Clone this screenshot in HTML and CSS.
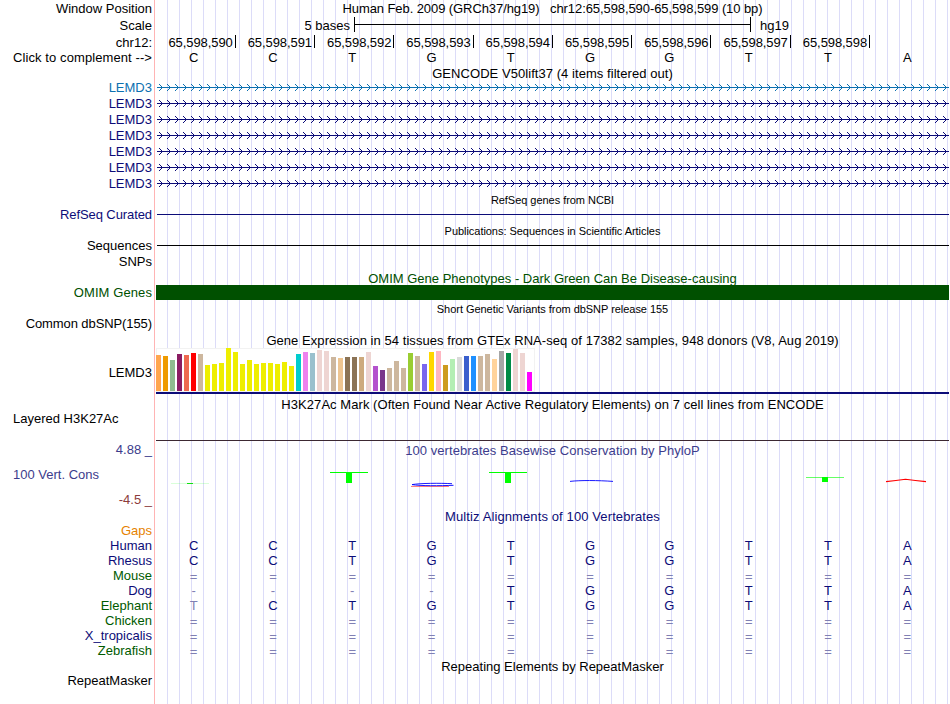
FILE: index.html
```html
<!DOCTYPE html>
<html lang="en">
<head>
<meta charset="utf-8">
<title>Human chr12:65,598,590-65,598,599</title>
<link rel="stylesheet" href="styles.css">
</head>
<body>
<div id="tracks">

<div class="row h17"><div class="label">Window Position</div><div class="data title" id="pos">Human Feb. 2009 (GRCh37/hg19) &nbsp; chr12:65,598,590-65,598,599 (10 bp)</div></div>
<div class="row h17"><div class="label">Scale</div><div class="data scale"><span class="bases">5 bases</span><span class="ruler"></span><span>hg19</span></div></div>
<div class="row h17"><div class="label">chr12:</div><div class="data ticks"><span><b>65,598,590</b></span><span><b>65,598,591</b></span><span><b>65,598,592</b></span><span><b>65,598,593</b></span><span><b>65,598,594</b></span><span><b>65,598,595</b></span><span><b>65,598,596</b></span><span><b>65,598,597</b></span><span><b>65,598,598</b></span></div></div>
<div class="row h14"><div class="label click">Click to complement --&gt;</div><div class="data seq top"><i>C</i><i>C</i><i>T</i><i>G</i><i>T</i><i>G</i><i>G</i><i>T</i><i>T</i><i>A</i></div></div>

<div class="row h15"><div class="label"></div><div class="data title low wide">GENCODE V50lift37 (4 items filtered out)</div></div>
<div class="row gene blue"><div class="label">LEMD3</div><svg class="data" width="793" height="16"><defs><pattern id="chev" width="8" height="16" patternUnits="userSpaceOnUse"><path d="M3 4L6.500 7.500L3 11" fill="none" stroke="#0c70b0"/></pattern><pattern id="chevn" width="8" height="16" patternUnits="userSpaceOnUse"><path d="M3 4L6.500 7.500L3 11" fill="none" stroke="#0c0c78"/></pattern></defs><rect x="1" width="792" height="16" fill="url(#chev)"/><rect x="1" y="7" width="792" height="1" fill="#0c70b0"/></svg></div>
<div class="row gene navy"><div class="label">LEMD3</div><svg class="data" width="793" height="16"><rect x="1" width="792" height="16" fill="url(#chevn)"/><rect x="1" y="7" width="792" height="1" fill="#0c0c78"/></svg></div>
<div class="row gene navy"><div class="label">LEMD3</div><svg class="data" width="793" height="16"><rect x="1" width="792" height="16" fill="url(#chevn)"/><rect x="1" y="7" width="792" height="1" fill="#0c0c78"/></svg></div>
<div class="row gene navy"><div class="label">LEMD3</div><svg class="data" width="793" height="16"><rect x="1" width="792" height="16" fill="url(#chevn)"/><rect x="1" y="7" width="792" height="1" fill="#0c0c78"/></svg></div>
<div class="row gene navy"><div class="label">LEMD3</div><svg class="data" width="793" height="16"><rect x="1" width="792" height="16" fill="url(#chevn)"/><rect x="1" y="7" width="792" height="1" fill="#0c0c78"/></svg></div>
<div class="row gene navy"><div class="label">LEMD3</div><svg class="data" width="793" height="16"><rect x="1" width="792" height="16" fill="url(#chevn)"/><rect x="1" y="7" width="792" height="1" fill="#0c0c78"/></svg></div>
<div class="row gene navy"><div class="label">LEMD3</div><svg class="data" width="793" height="16"><rect x="1" width="792" height="16" fill="url(#chevn)"/><rect x="1" y="7" width="792" height="1" fill="#0c0c78"/></svg></div>

<div class="row h15"><div class="label"></div><div class="data title small">RefSeq genes from NCBI</div></div>
<div class="row h16 navy"><div class="label tight">RefSeq Curated</div><div class="data"><div class="line"></div></div></div>
<div class="row h15"><div class="label"></div><div class="data title small">Publications: Sequences in Scientific Articles</div></div>
<div class="row h16"><div class="label">Sequences</div><div class="data"><div class="line"></div></div></div>
<div class="row h16"><div class="label">SNPs</div></div>

<div class="row h15 green"><div class="label"></div><div class="data title low">OMIM Gene Phenotypes - Dark Green Can Be Disease-causing</div></div>
<div class="row h15 green"><div class="label click">OMIM Genes</div><div class="data block"></div></div>
<div class="row h16"><div class="label"></div><div class="data title small">Short Genetic Variants from dbSNP release 155</div></div>
<div class="row h16"><div class="label tight">Common dbSNP(155)</div></div>

<div class="row h16"><div class="label"></div><div class="data title low wide">Gene Expression in 54 tissues from GTEx RNA-seq of 17382 samples, 948 donors (V8, Aug 2019)</div></div>
<div class="row expr"><div class="label low">LEMD3</div><div class="data">
<div class="bars">
<i style="height:36px;background:#ffa54f"></i>
<i style="height:35px;background:#ee9a00"></i>
<i style="height:31px;background:#8fbc8f"></i>
<i style="height:37px;background:#8b1c62"></i>
<i style="height:36px;background:#ee6a50"></i>
<i style="height:38px;background:#ff0000"></i>
<i style="height:37px;background:#cdb79e"></i>
<i style="height:26px;background:#eeee00"></i>
<i style="height:27px;background:#eeee00"></i>
<i style="height:28px;background:#eeee00"></i>
<i style="height:43px;background:#eeee00"></i>
<i style="height:39px;background:#eeee00"></i>
<i style="height:27px;background:#eeee00"></i>
<i style="height:31px;background:#eeee00"></i>
<i style="height:27px;background:#eeee00"></i>
<i style="height:28px;background:#eeee00"></i>
<i style="height:28px;background:#eeee00"></i>
<i style="height:27px;background:#eeee00"></i>
<i style="height:29px;background:#eeee00"></i>
<i style="height:25px;background:#eeee00"></i>
<i style="height:37px;background:#00cdcd"></i>
<i style="height:39px;background:#ee82ee"></i>
<i style="height:38px;background:#9ac0cd"></i>
<i style="height:41px;background:#eed5d2"></i>
<i style="height:40px;background:#eed5d2"></i>
<i style="height:34px;background:#cdb79e"></i>
<i style="height:33px;background:#eec591"></i>
<i style="height:34px;background:#8b7355"></i>
<i style="height:34px;background:#8b7355"></i>
<i style="height:34px;background:#cdaa7d"></i>
<i style="height:39px;background:#eed5d2"></i>
<i style="height:25px;background:#b452cd"></i>
<i style="height:21px;background:#7a378b"></i>
<i style="height:23px;background:#cdb79e"></i>
<i style="height:30px;background:#cdb79e"></i>
<i style="height:23px;background:#cdb79e"></i>
<i style="height:38px;background:#9acd32"></i>
<i style="height:35px;background:#cdb79e"></i>
<i style="height:27px;background:#7a67ee"></i>
<i style="height:39px;background:#ffd700"></i>
<i style="height:40px;background:#ffb6c1"></i>
<i style="height:26px;background:#cd9b1d"></i>
<i style="height:32px;background:#b4eeb4"></i>
<i style="height:34px;background:#d9d9d9"></i>
<i style="height:35px;background:#3a5fcd"></i>
<i style="height:35px;background:#1e90ff"></i>
<i style="height:35px;background:#cdb79e"></i>
<i style="height:37px;background:#cdb79e"></i>
<i style="height:32px;background:#ffd39b"></i>
<i style="height:40px;background:#a6a6a6"></i>
<i style="height:38px;background:#008b45"></i>
<i style="height:42px;background:#eed5d2"></i>
<i style="height:38px;background:#eed5d2"></i>
<i style="height:19px;background:#ff00ff"></i>
</div>
<div class="model"></div>
</div></div>

<div class="row h16"><div class="label"></div><div class="data title low wide">H3K27Ac Mark (Often Found Near Active Regulatory Elements) on 7 cell lines from ENCODE</div></div>
<div class="row layered"><div class="label left">Layered H3K27Ac</div><div class="data"></div></div>

<div class="cons">
<div class="scales"><div class="max">4.88 _</div><div class="name">100 Vert. Cons</div><div class="min">-4.5 _</div></div>
<div class="data">
<div class="title wide">100 vertebrates Basewise Conservation by PhyloP</div>
<svg width="793" height="48" viewBox="156 458 793 48">
<path d="M171 483.5h38" stroke="#00ff00" stroke-opacity=".15"/>
<path d="M187 483.5h6" stroke="#10e010"/>
<path d="M330 472.5h38M489 472.5h38" stroke="#00ff00"/>
<path d="M346 472h6v11h-6zM505 472h6v11h-6zM822 477h6v5h-6z" fill="#00ff00"/>
<path d="M806 477.5h38" stroke="#00ff00" stroke-opacity=".6"/>
<path d="M411 486.5h38" stroke="#ff0000" stroke-opacity=".5"/>
<path d="M452 483.7C440 483 420 483.2 412 484.6C420 486 440 485.8 453.500 485.300" fill="none" stroke="#0000ff" stroke-width=".9"/>
<path d="M570 481.400C580 480.200 598 480.300 613 481.400" fill="none" stroke="#0000ff" stroke-width=".9"/>
<path d="M886 481.600Q896 480.800 905.500 479.300Q915 480.800 926 481.600" fill="none" stroke="#ff0000" stroke-width="1.100"/>
</svg>
</div>
</div>

<div class="row h15 navy"><div class="label"></div><div class="data title low wider">Multiz Alignments of 100 Vertebrates</div></div>
<div class="row h15 orange"><div class="label">Gaps</div></div>
<div class="row h15 navy"><div class="label">Human</div><div class="data seq"><i>C</i><i>C</i><i>T</i><i>G</i><i>T</i><i>G</i><i>G</i><i>T</i><i>T</i><i>A</i></div></div>
<div class="row h15 navy"><div class="label">Rhesus</div><div class="data seq"><i>C</i><i>C</i><i>T</i><i>G</i><i>T</i><i>G</i><i>G</i><i>T</i><i>T</i><i>A</i></div></div>
<div class="row h15 dgreen"><div class="label">Mouse</div><div class="data seq pale low"><i>=</i><i>=</i><i>=</i><i>=</i><i>=</i><i>=</i><i>=</i><i>=</i><i>=</i><i>=</i></div></div>
<div class="row h15 navy"><div class="label">Dog</div><div class="data seq"><i class="pale">-</i><i class="pale">-</i><i class="pale">-</i><i class="pale">-</i><i>T</i><i>G</i><i>G</i><i>T</i><i>T</i><i>A</i></div></div>
<div class="row h15 dgreen"><div class="label">Elephant</div><div class="data seq navy"><i class="pale">T</i><i>C</i><i>T</i><i>G</i><i>T</i><i>G</i><i>G</i><i>T</i><i>T</i><i>A</i></div></div>
<div class="row h15 dgreen"><div class="label">Chicken</div><div class="data seq pale low"><i>=</i><i>=</i><i>=</i><i>=</i><i>=</i><i>=</i><i>=</i><i>=</i><i>=</i><i>=</i></div></div>
<div class="row h15 navy"><div class="label">X_tropicalis</div><div class="data seq pale low"><i>=</i><i>=</i><i>=</i><i>=</i><i>=</i><i>=</i><i>=</i><i>=</i><i>=</i><i>=</i></div></div>
<div class="row h15 dgreen"><div class="label">Zebrafish</div><div class="data seq pale low"><i>=</i><i>=</i><i>=</i><i>=</i><i>=</i><i>=</i><i>=</i><i>=</i><i>=</i><i>=</i></div></div>

<div class="row h15"><div class="label"></div><div class="data title low">Repeating Elements by RepeatMasker</div></div>
<div class="row h15"><div class="label">RepeatMasker</div></div>

</div>
</body>
</html>
```
FILE: styles.css
```css
body{
 margin:0;
 background:#fff;
 color:#000;
 font-family:"Liberation Sans",Arial,sans-serif;
 font-size:13px;
}
i,b{
 font-style:normal;
 font-weight:normal;
}
/* red edge of the label column, then a guide line every 12px */
#tracks{
 width:949px;
 height:704px;
 overflow:hidden;
 background:
  linear-gradient(#ffb4b4,#ffb4b4) 154px 0/1px 100% no-repeat,
  repeating-linear-gradient(90deg,#dcdcf8 0,#dcdcf8 1px,transparent 1px,transparent 12px) 167px 0/782px 100% no-repeat;
}
.row{
 display:flex;
 height:16px;
 line-height:16px;
 white-space:nowrap;
}
.h17{height:17px;line-height:17px;}
.h15{height:15px;line-height:15px;}
.h14{height:14px;line-height:14px;}
.label{
 width:152px;
 margin-right:4px;
 flex:none;
 text-align:right;
}
.left{
 box-sizing:border-box;
 padding-left:13px;
 text-align:left;
}
.data{
 flex:1;
 min-width:0;
}
.title{text-align:center;}
.low{padding-top:1px;}
.small{font-size:11px;padding-top:1px;letter-spacing:-.04px;}
.wide{letter-spacing:.055px;}
.wider{letter-spacing:.11px;}
.click{letter-spacing:.09px;}
.tight{letter-spacing:-.09px;}
#pos{letter-spacing:-.085px;}

.navy{color:#0c0c78;}
.blue{color:#0c70b0;}
.green{color:#005000;}
.dgreen{color:#005a00;}
.orange{color:#e68200;}
.pale{color:#8080b4;}

.scale{display:flex;}
.bases{
 width:194px;
 margin-right:4px;
 text-align:right;
}
.ruler{
 width:395px;
 height:15px;
 margin-right:9px;
 border-left:1px solid #000;
 border-right:1px solid #000;
 background:linear-gradient(#000,#000) 0 7px/100% 1px no-repeat;
}
.ticks{
 display:grid;
 grid-template-columns:repeat(10,79.3px);
 padding-left:.4px;
 letter-spacing:-.08px;
}
.ticks span{
 height:13px;
 margin-top:1px;
 border-right:1px solid #000;
 text-align:right;
 line-height:15px;
}
.ticks b{padding-right:2px;}
.seq{
 display:grid;
 grid-template-columns:repeat(10,79.3px);
 margin-left:-2px;
 text-align:center;
}

.line{
 height:1px;
 margin:7px 0 0 1px;
 background:currentColor;
}
.block{background:#005000;}

.expr{height:48px;line-height:48px;}
.bars{
 box-sizing:border-box;
 display:flex;
 align-items:flex-end;
 gap:2px;
 width:379px;
 height:44px;
 padding-bottom:1px;
 background:#fff;
 box-shadow:inset 0 0 0 1px #f2f2f2;
}
.bars i{width:5px;flex:none;}
.model{
 height:2px;
 background:#0c0c78;
}
.layered{height:30px;line-height:14px;}
.layered .data{
 height:28px;
 border-bottom:1px solid #3c2832;
}

.cons{
 display:flex;
 height:66px;
 color:#3c3c8c;
}
.scales{
 width:152px;
 margin-right:4px;
 line-height:16px;
 text-align:right;
}
.name{
 padding:9px 0 9px 13px;
 text-align:left;
}
.min{color:#8c3c3c;}
.cons .title{height:16px;line-height:17px;}
.cons svg{display:block;}
```
